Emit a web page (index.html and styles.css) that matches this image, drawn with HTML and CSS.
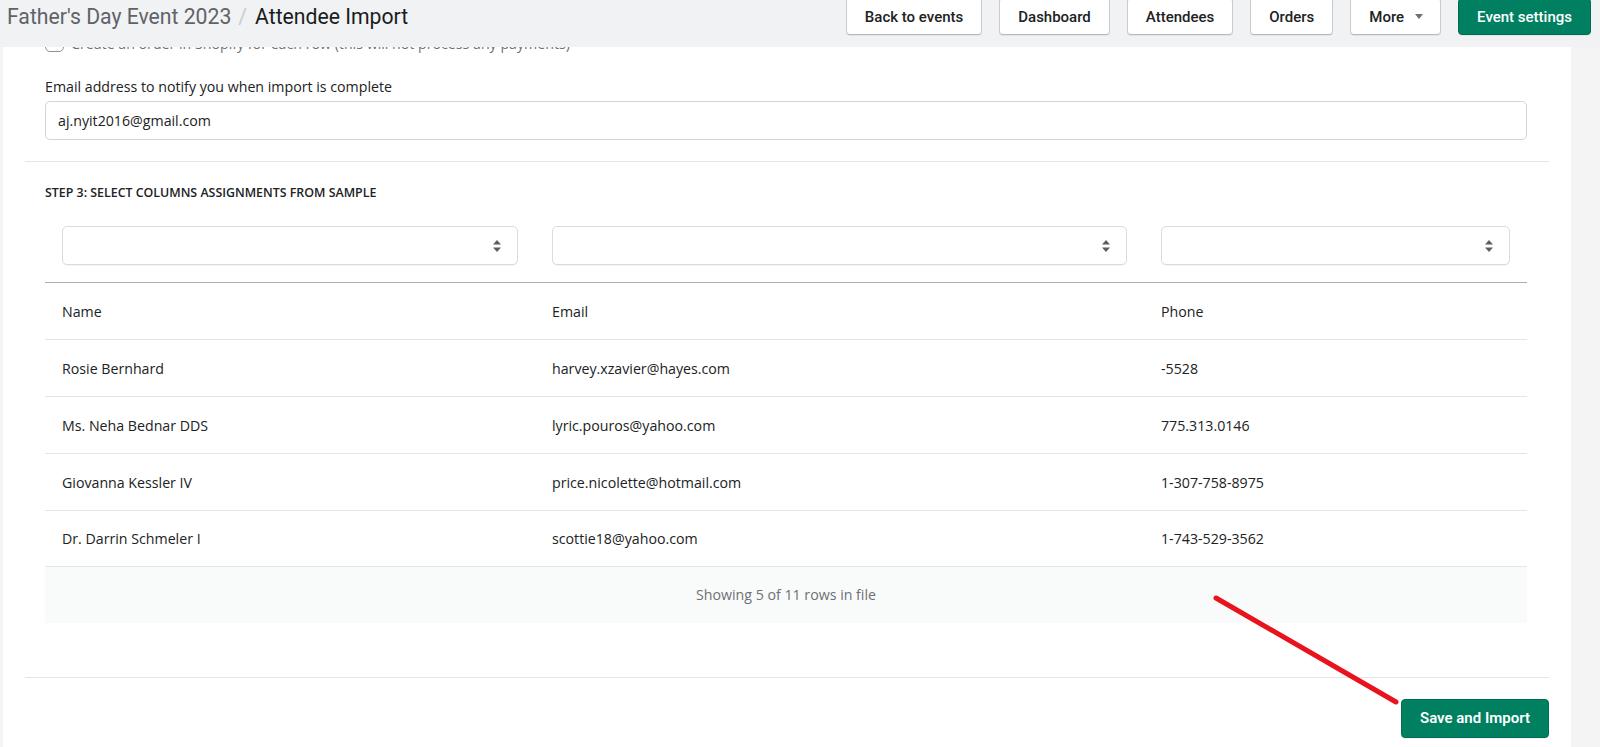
FILE: index.html
```html
<!DOCTYPE html>
<html lang="en">
<head>
<meta charset="utf-8">
<title>Attendee Import</title>
<link rel="stylesheet" href="styles.css">
</head>
<body>
<header class="topbar">
  <div class="crumbs">
    <span class="crumb-parent">Father's Day Event 2023</span>
    <span class="crumb-sep">/</span>
    <span class="crumb-current">Attendee Import</span>
  </div>
  <nav class="actions">
    <button class="btn">Back to events</button>
    <button class="btn">Dashboard</button>
    <button class="btn">Attendees</button>
    <button class="btn">Orders</button>
    <button class="btn btn-more">More <span class="caret"></span></button>
    <button class="btn btn-primary">Event settings</button>
  </nav>
</header>

<main class="page">
  <div class="card">
    <section class="section section-settings">
      <label class="check-row">
        <span class="checkbox"></span>
        <span class="check-text">Create an order in Shopify for each row (this will not process any payments)</span>
      </label>
      <div class="field-label">Email address to notify you when import is complete</div>
      <div class="input">aj.nyit2016@gmail.com</div>
    </section>

    <section class="section section-step">
      <h3 class="step-title">Step 3: Select columns assignments from sample</h3>
      <table class="sample">
        <colgroup>
          <col class="col-name">
          <col class="col-email">
          <col class="col-phone">
        </colgroup>
        <thead>
          <tr class="select-row">
            <th><div class="select"><svg class="updown" viewBox="0 0 8 12" width="8" height="12"><path d="M4 0 L8 4.5 H0 Z M4 12 L8 7.5 H0 Z"/></svg></div></th>
            <th><div class="select"><svg class="updown" viewBox="0 0 8 12" width="8" height="12"><path d="M4 0 L8 4.5 H0 Z M4 12 L8 7.5 H0 Z"/></svg></div></th>
            <th><div class="select"><svg class="updown" viewBox="0 0 8 12" width="8" height="12"><path d="M4 0 L8 4.5 H0 Z M4 12 L8 7.5 H0 Z"/></svg></div></th>
          </tr>
        </thead>
        <tbody>
          <tr><td>Name</td><td>Email</td><td>Phone</td></tr>
          <tr><td>Rosie Bernhard</td><td>harvey.xzavier@hayes.com</td><td>-5528</td></tr>
          <tr><td>Ms. Neha Bednar DDS</td><td>lyric.pouros@yahoo.com</td><td>775.313.0146</td></tr>
          <tr><td>Giovanna Kessler IV</td><td>price.nicolette@hotmail.com</td><td>1-307-758-8975</td></tr>
          <tr class="last-row"><td>Dr. Darrin Schmeler I</td><td>scottie18@yahoo.com</td><td>1-743-529-3562</td></tr>
        </tbody>
        <tfoot>
          <tr><td colspan="3">Showing 5 of 11 rows in file</td></tr>
        </tfoot>
      </table>
    </section>

    <section class="section section-actions">
      <button class="btn btn-primary btn-save">Save and Import</button>
    </section>
  </div>
</main>

<svg class="annotation" viewBox="0 0 1600 747" width="1600" height="747">
  <line x1="1216" y1="598" x2="1396" y2="702"/>
</svg>
</body>
</html>
```

FILE: styles.css
```css
* { box-sizing: border-box; }

html, body {
  margin: 0;
  height: 747px;
  overflow: hidden;
}

body {
  background: #f4f4f4;
  font-family: "Open Sans", "Noto Sans", sans-serif;
  font-size: 14.2px;
  color: #202223;
  position: relative;
}

/* ---------- top bar ---------- */
.topbar {
  position: relative;
  z-index: 2;
  display: flex;
  align-items: center;
  justify-content: space-between;
  height: 47px;
  padding: 0 9px 14px 7px;
  background: #f1f2f3;
  font-family: Roboto, "Open Sans", sans-serif;
}

.crumbs {
  font-size: 21.2px;
  white-space: nowrap;
  display: flex;
  align-items: center;
}

.crumb-parent { color: #5f6368; }
.crumb-sep { color: #c9cccf; margin: 0 8px 0 7px; }
.crumb-current { color: #1a1c1d; }

.actions {
  display: flex;
  gap: 17px;
}

.btn {
  font-family: Roboto, "Open Sans", sans-serif;
  height: 37px;
  padding: 0 18px;
  font-size: 15px;
  font-weight: 500;
  color: #202223;
  background: #fff;
  border: 1px solid #c9cccf;
  border-bottom-color: #b3b8bd;
  border-radius: 4px;
  box-shadow: 0 1px 0 rgba(0, 0, 0, 0.05);
  display: inline-flex;
  align-items: center;
  white-space: nowrap;
}

.btn-more { padding-right: 17px; }

.caret {
  display: inline-block;
  width: 0;
  height: 0;
  margin-left: 11px;
  border-left: 4.5px solid transparent;
  border-right: 4.5px solid transparent;
  border-top: 5px solid #6d7175;
}

.btn-primary {
  background: #008060;
  border-color: #006e52;
  color: #fff;
}

/* ---------- card ---------- */
.page {
  margin-top: -14px;
  padding: 0 29px 0 3px;
}

.card {
  background: #fff;
  padding: 0 22px;
  min-height: 760px;
}

.section {
  padding: 0 22px 0 20px;
  border-bottom: 1px solid #e4e5e7;
}

.section-settings {
  padding-top: 1px;
  padding-bottom: 21px;
}

.check-row {
  display: flex;
  align-items: center;
  gap: 7px;
  height: 18px;
  color: #6d7175;
  white-space: nowrap;
}

.checkbox {
  width: 19px;
  height: 18px;
  border: 1.5px solid #8c9196;
  border-radius: 5px;
  flex: none;
}

.field-label {
  margin-top: 25px;
  line-height: 20px;
}

.input {
  margin-top: 4px;
  height: 39px;
  border: 1px solid #d2d5d8;
  border-radius: 5px;
  display: flex;
  align-items: center;
  padding: 0 12px;
}

.section-step {
  padding-top: 23px;
  padding-bottom: 54px;
}

.step-title {
  margin: 0;
  font-size: 12.4px;
  font-weight: 600;
  line-height: 16px;
  text-transform: uppercase;
  color: #202223;
}

.sample {
  margin-top: 25px;
  width: 100%;
  table-layout: fixed;
  border-collapse: collapse;
}

.col-name { width: 490px; }
.col-email { width: 609px; }
.col-phone { width: 383px; }

.select-row th {
  padding: 0 17px 17px;
  border-bottom: 1px solid #a9aeb3;
  font-weight: normal;
}

.select {
  height: 39px;
  border: 1px solid #d9dbdd;
  border-radius: 5px;
  box-shadow: 0 1px 0 rgba(0, 0, 0, 0.04);
  display: flex;
  align-items: center;
  justify-content: flex-end;
  padding-right: 16px;
}

.updown { fill: #5c5f62; }

.sample td {
  height: 57px;
  padding: 0 17px;
  border-bottom: 1px solid #e4e5e7;
  text-align: left;
  color: #202223;
}

.sample .last-row td { height: 56px; }

.sample tfoot td {
  height: 56px;
  border-bottom: none;
  background: #f9fafa;
  text-align: center;
  color: #6d7175;
}

.section-actions {
  display: flex;
  justify-content: flex-end;
  padding: 21px 0 20px;
  border-bottom: none;
}

.btn-save {
  height: 39px;
  padding: 0 18px;
  font-weight: 600;
}

/* ---------- annotation ---------- */
.annotation {
  position: absolute;
  left: 0;
  top: 0;
  pointer-events: none;
  z-index: 3;
}

.annotation line {
  stroke: #e8131c;
  stroke-width: 5;
  stroke-linecap: round;
}
```
